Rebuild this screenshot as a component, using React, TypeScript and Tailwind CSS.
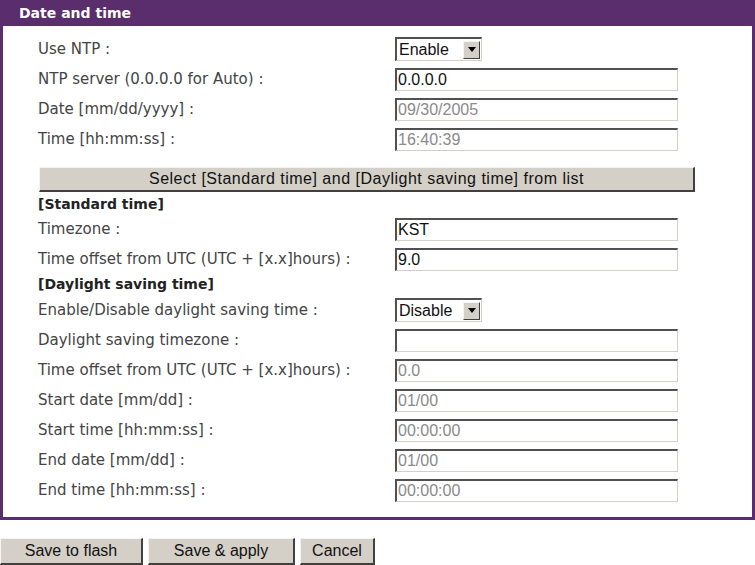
import React from "react";

type Row =
  | { kind: "select"; label: string; value: string }
  | { kind: "input"; label: string; value: string; disabled?: boolean };

const ntpRows: Row[] = [
  { kind: "select", label: "Use NTP :", value: "Enable" },
  { kind: "input", label: "NTP server (0.0.0.0 for Auto) :", value: "0.0.0.0" },
  { kind: "input", label: "Date [mm/dd/yyyy] :", value: "09/30/2005", disabled: true },
  { kind: "input", label: "Time [hh:mm:ss] :", value: "16:40:39", disabled: true },
];

const standardRows: Row[] = [
  { kind: "input", label: "Timezone :", value: "KST" },
  { kind: "input", label: "Time offset from UTC (UTC + [x.x]hours) :", value: "9.0" },
];

const daylightRows: Row[] = [
  { kind: "select", label: "Enable/Disable daylight saving time :", value: "Disable" },
  { kind: "input", label: "Daylight saving timezone :", value: "" },
  { kind: "input", label: "Time offset from UTC (UTC + [x.x]hours) :", value: "0.0", disabled: true },
  { kind: "input", label: "Start date [mm/dd] :", value: "01/00", disabled: true },
  { kind: "input", label: "Start time [hh:mm:ss] :", value: "00:00:00", disabled: true },
  { kind: "input", label: "End date [mm/dd] :", value: "01/00", disabled: true },
  { kind: "input", label: "End time [hh:mm:ss] :", value: "00:00:00", disabled: true },
];

function SelectBox({ value }: { value: string }) {
  return (
    <div className="flex h-[24px] w-[87px] items-center border-t-2 border-l-2 border-b border-r border-t-[#505050] border-l-[#505050] border-b-[#d4d0c8] border-r-[#d4d0c8] bg-white">
      <span className="flex-1 pl-[2px] font-['Liberation_Sans',sans-serif] text-[16px] leading-none text-[#111]">
        {value}
      </span>
      <span className="mr-[1px] flex h-[18px] w-[17px] items-center justify-center border border-t-[#f4f4f4] border-l-[#f4f4f4] border-b-[#404040] border-r-[#404040] bg-[#d4d0c8]">
        <svg viewBox="0 0 8 5" className="h-[5px] w-[8px]">
          <path d="M0 0h8L4 5Z" fill="#000" />
        </svg>
      </span>
    </div>
  );
}

function TextBox({ value, disabled }: { value: string; disabled?: boolean }) {
  return (
    <div className="flex h-[23px] w-[283px] items-center border-t-2 border-l-2 border-b border-r border-t-[#505050] border-l-[#505050] border-b-[#d4d0c8] border-r-[#d4d0c8] bg-white">
      <span
        className={
          disabled
            ? "pl-[1px] font-['Liberation_Sans',sans-serif] text-[16px] leading-none text-[#8a8a8a]"
            : "pl-[1px] font-['Liberation_Sans',sans-serif] text-[16px] leading-none text-[#111]"
        }
      >
        {value}
      </span>
    </div>
  );
}

function FormRow({ row }: { row: Row }) {
  return (
    <div className="flex h-[30px] items-center">
      <span className="w-[357px] text-[15px] text-[#444]">{row.label}</span>
      {row.kind === "select" ? (
        <SelectBox value={row.value} />
      ) : (
        <TextBox value={row.value} disabled={row.disabled} />
      )}
    </div>
  );
}

function ClassicButton({ label, width }: { label: string; width: string }) {
  return (
    <button
      className={`${width} flex h-[27px] items-center justify-center border-t border-l border-b-2 border-r-2 border-t-[#f4f4f4] border-l-[#f4f4f4] border-b-[#404040] border-r-[#404040] bg-[#d4d0c8] font-['Liberation_Sans',sans-serif] text-[16px] text-[#111]`}
    >
      {label}
    </button>
  );
}

export default function App() {
  return (
    <div className="h-[565px] w-[755px] overflow-hidden bg-white font-['DejaVu_Sans',sans-serif]">
      <div className="flex h-[26px] items-center bg-[#5a2d6d] pl-[19px] text-[14px] font-bold text-white">
        Date and time
      </div>

      <div className="border-x-[3px] border-b-[3px] border-[#5a2d6d] pb-[12px] pl-[35px] pt-[8px]">
        {ntpRows.map((row) => (
          <FormRow key={row.label} row={row} />
        ))}

        <button className="ml-[1px] mt-[13px] mb-[2px] flex h-[25px] w-[656px] items-center justify-center border-t border-l border-b-2 border-r-2 border-t-[#f4f4f4] border-l-[#f4f4f4] border-b-[#404040] border-r-[#404040] bg-[#d4d0c8] font-['Liberation_Sans',sans-serif] text-[16px] tracking-[0.5px] text-[#111]">
          Select [Standard time] and [Daylight saving time] from list
        </button>

        <div className="flex h-[20px] items-center text-[14px] font-bold text-[#222]">[Standard time]</div>
        {standardRows.map((row) => (
          <FormRow key={row.label} row={row} />
        ))}

        <div className="flex h-[21px] items-center text-[14px] font-bold text-[#222]">
          [Daylight saving time]
        </div>
        {daylightRows.map((row) => (
          <FormRow key={row.label + row.value} row={row} />
        ))}
      </div>

      <div className="mt-[18px] flex gap-[5px]">
        <ClassicButton label="Save to flash" width="w-[143px]" />
        <ClassicButton label="Save & apply" width="w-[147px]" />
        <ClassicButton label="Cancel" width="w-[75px]" />
      </div>
    </div>
  );
}
